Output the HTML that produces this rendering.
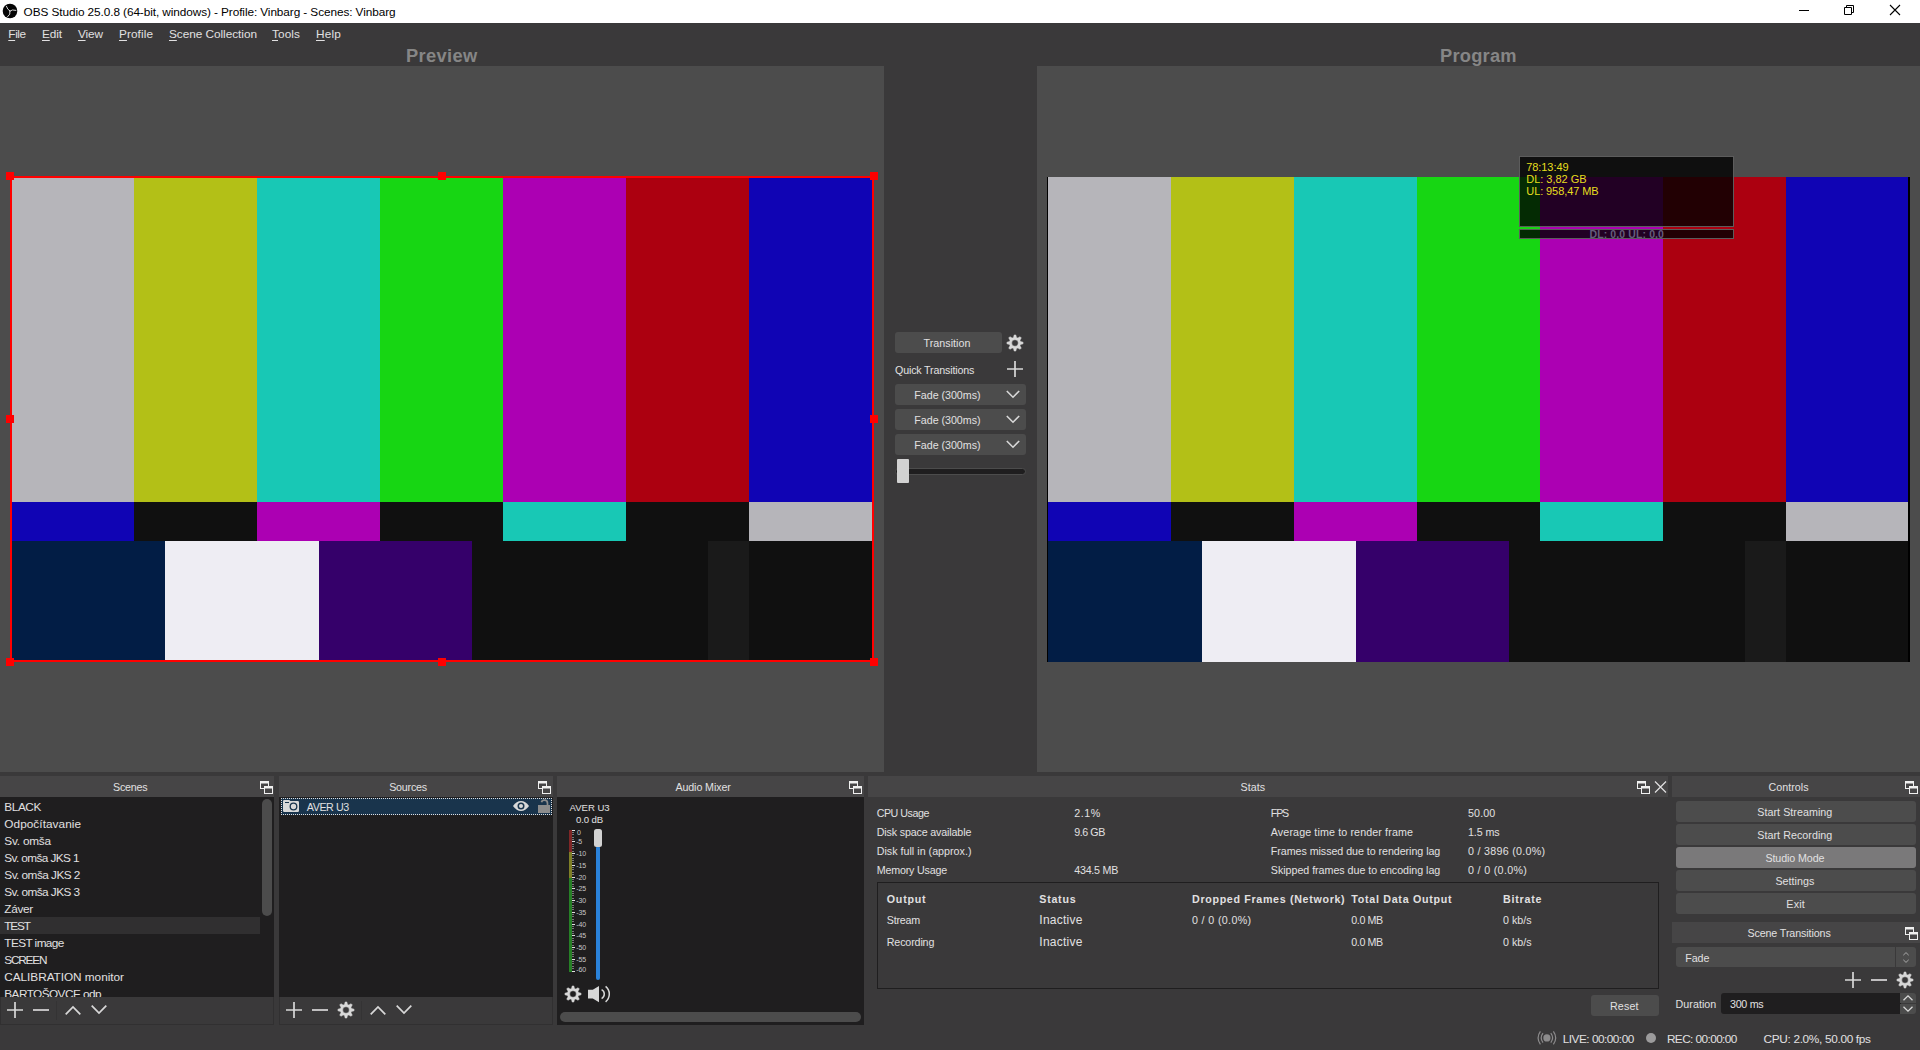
<!DOCTYPE html>
<html>
<head>
<meta charset="utf-8">
<title>OBS Studio</title>
<style>
*{box-sizing:border-box;margin:0;padding:0}
html,body{width:1920px;height:1050px;overflow:hidden;background:#3a393a;font-family:"Liberation Sans",sans-serif;color:#e1e0e1}
.a{position:absolute}
.t{position:absolute;white-space:nowrap}
.bars{position:absolute;overflow:hidden;background:#101010}
.bars div{position:absolute}
svg{position:absolute;overflow:visible}
u{text-decoration:underline;text-underline-offset:1.500px;text-decoration-thickness:1px}
</style>
</head>
<body>

<div class="a" style="left:0px;top:0px;width:1920px;height:23px;background:#fff;"></div>
<svg style="left:2px;top:3px" width="16" height="16" viewBox="0 0 16 16"><g transform="translate(0.5 0.5)"><circle cx="7.500" cy="7.500" r="7.300" fill="#050505"/><g fill="none" stroke="#d8d8d8" stroke-width="1" stroke-linecap="round"><path d="M7.500 7.500Q4.700 6.200 3.900 2.800"/><path d="M7.500 7.500Q9.300 5.600 13.400 6.800"/><path d="M7.500 7.500Q8.400 11 5.200 13.200"/></g></g></svg>
<div class="t" style="left:23.60px;top:3.50px;font-size:11.8px;line-height:16px;height:16px;color:#000;letter-spacing:-0.084px">OBS Studio 25.0.8 (64-bit, windows) - Profile: Vinbarg - Scenes: Vinbarg</div>
<svg style="left:1799px;top:10px" width="11" height="2" viewBox="0 0 11 2"><path d="M0 .5h10" stroke="#000"/></svg>
<svg style="left:1844px;top:5px" width="11" height="11" viewBox="0 0 11 11"><path d="M.5 2.500h7v7h-7zM2.500 2.500v-2h7v7h-2" fill="none" stroke="#000"/></svg>
<svg style="left:1890px;top:5px" width="11" height="11" viewBox="0 0 11 11"><path d="M0 0l10 10M10 0L0 10" stroke="#000" stroke-width="1.100"/></svg>
<div class="t" style="left:8.30px;top:25.60px;font-size:11.8px;line-height:16px;height:16px;letter-spacing:-0.380px"><u>F</u>ile</div>
<div class="t" style="left:42.00px;top:25.60px;font-size:11.8px;line-height:16px;height:16px;letter-spacing:-0.098px"><u>E</u>dit</div>
<div class="t" style="left:78.00px;top:25.60px;font-size:11.8px;line-height:16px;height:16px;letter-spacing:-0.103px"><u>V</u>iew</div>
<div class="t" style="left:119.00px;top:25.60px;font-size:11.8px;line-height:16px;height:16px;letter-spacing:0.084px"><u>P</u>rofile</div>
<div class="t" style="left:169.00px;top:25.60px;font-size:11.8px;line-height:16px;height:16px;letter-spacing:-0.035px"><u>S</u>cene Collection</div>
<div class="t" style="left:272.00px;top:25.60px;font-size:11.8px;line-height:16px;height:16px;letter-spacing:0.097px"><u>T</u>ools</div>
<div class="t" style="left:316.00px;top:25.60px;font-size:11.8px;line-height:16px;height:16px;letter-spacing:0.205px"><u>H</u>elp</div>
<div class="t" style="left:406.00px;top:43.75px;font-size:18.3px;line-height:24px;height:24px;font-weight:bold;color:#868686;letter-spacing:0.352px">Preview</div>
<div class="t" style="left:1440.00px;top:43.75px;font-size:18.3px;line-height:24px;height:24px;font-weight:bold;color:#868686;letter-spacing:0.233px">Program</div>
<div class="a" style="left:0px;top:66px;width:884px;height:706px;background:#4c4c4c;"></div>
<div class="a" style="left:1037px;top:66px;width:883px;height:706px;background:#4c4c4c;"></div>
<div class="bars" style="left:11px;top:178px;width:861px;height:482px"><div style="left:0;top:0px;width:861px;height:324px;background:linear-gradient(90deg,#b6b5ba 0px 123.0px,#b3c017 123.0px 246.0px,#18c8b5 246.0px 369.0px,#17d613 369.0px 492.0px,#ac00b3 492.0px 615.0px,#ac0010 615.0px 738.0px,#1004b4 738.0px 861.0px)"></div><div style="left:0;top:324px;width:861px;height:39px;background:linear-gradient(90deg,#1004b4 0px 123.0px,#101010 123.0px 246.0px,#ac00b3 246.0px 369.0px,#101010 369.0px 492.0px,#18c8b5 492.0px 615.0px,#101010 615.0px 738.0px,#b6b5ba 738.0px 861.0px)"></div><div style="left:0;top:363px;width:861px;height:119px;background:linear-gradient(90deg,#021d45 0px 153.75px,#eeedf3 153.75px 307.5px,#35006a 307.5px 461.25px,#101010 461.25px 697.0px,#1a1a1a 697.0px 738.0px,#101010 738.0px 861.0px)"></div></div>
<div class="bars" style="left:1047px;top:177px;width:863px;height:485px"><div style="left:0;top:0px;width:863px;height:325px;background:linear-gradient(90deg,#000 0px 1.4px,#b6b5ba 1.4px 124.27px,#b3c017 124.27px 247.14px,#18c8b5 247.14px 370.01px,#17d613 370.01px 492.89px,#ac00b3 492.89px 615.76px,#ac0010 615.76px 738.63px,#1004b4 738.63px 861.5px,#000 861.5px 863px)"></div><div style="left:0;top:325px;width:863px;height:39px;background:linear-gradient(90deg,#000 0px 1.4px,#1004b4 1.4px 124.27px,#101010 124.27px 247.14px,#ac00b3 247.14px 370.01px,#101010 370.01px 492.89px,#18c8b5 492.89px 615.76px,#101010 615.76px 738.63px,#b6b5ba 738.63px 861.5px,#000 861.5px 863px)"></div><div style="left:0;top:364px;width:863px;height:121px;background:linear-gradient(90deg,#000 0px 1.4px,#021d45 1.4px 154.99px,#eeedf3 154.99px 308.58px,#35006a 308.58px 462.17px,#101010 462.17px 697.67px,#1a1a1a 697.67px 738.63px,#101010 738.63px 861.5px,#000 861.5px 863px)"></div></div>
<div class="a" style="left:10px;top:176px;width:864px;height:486px;border:2px solid #f00"></div>
<div class="a" style="left:6px;top:172px;width:8px;height:8px;background:#f00;"></div>
<div class="a" style="left:438px;top:172px;width:8px;height:8px;background:#f00;"></div>
<div class="a" style="left:870px;top:172px;width:8px;height:8px;background:#f00;"></div>
<div class="a" style="left:6px;top:415px;width:8px;height:8px;background:#f00;"></div>
<div class="a" style="left:870px;top:415px;width:8px;height:8px;background:#f00;"></div>
<div class="a" style="left:6px;top:658px;width:8px;height:8px;background:#f00;"></div>
<div class="a" style="left:438px;top:658px;width:8px;height:8px;background:#f00;"></div>
<div class="a" style="left:870px;top:658px;width:8px;height:8px;background:#f00;"></div>
<div class="a" style="left:1519px;top:156px;width:215px;height:71px;background:rgba(0,0,0,.8);border:1px solid #5c5c5c"></div>
<div class="a" style="left:1519px;top:229px;width:215px;height:10px;background:rgba(0,0,0,.8);border:1px solid #5c5c5c"></div>
<div class="t" style="left:1526.30px;top:160.30px;font-size:11px;line-height:14px;height:14px;color:#e6de1e;letter-spacing:-0.084px">78:13:49</div>
<div class="t" style="left:1526.30px;top:172.30px;font-size:11px;line-height:14px;height:14px;color:#e6de1e;letter-spacing:-0.033px">DL: 3,82 GB</div>
<div class="t" style="left:1526.30px;top:184.30px;font-size:11px;line-height:14px;height:14px;color:#e6de1e;letter-spacing:-0.094px">UL: 958,47 MB</div>
<div class="t" style="left:1589.50px;top:228.00px;font-size:10.5px;line-height:12px;height:12px;font-weight:bold;color:#655d7c;letter-spacing:0.108px">DL: 0,0 UL: 0,0</div>
<div class="a" style="left:895px;top:332px;width:107px;height:21px;background:#4c4c4c;border-radius:3px;"></div>
<div class="t" style="left:923.50px;top:335.00px;font-size:10.7px;line-height:16px;height:16px;letter-spacing:0.049px">Transition</div>
<svg style="left:1007px;top:335px" width="17" height="17" viewBox="0 0 17 17"><path fill="#d8d8d8" fill-rule="evenodd" stroke="#d8d8d8" stroke-width=".5" stroke-linejoin="round" d="M6.52 2.49L7.15 -0.06L8.85 -0.06L9.48 2.49L10.85 3.06L13.10 1.71L14.29 2.90L12.94 5.15L13.51 6.52L16.06 7.15L16.06 8.85L13.51 9.48L12.94 10.85L14.29 13.10L13.10 14.29L10.85 12.94L9.48 13.51L8.85 16.06L7.15 16.06L6.52 13.51L5.15 12.94L2.90 14.29L1.71 13.10L3.06 10.85L2.49 9.48L-0.06 8.85L-0.06 7.15L2.49 6.52L3.06 5.15L1.71 2.90L2.90 1.71L5.15 3.06zM8 4.700a3.300 3.300 0 1 0 0 6.600 3.300 3.300 0 0 0 0-6.600z"/></svg>
<div class="t" style="left:895.00px;top:362.00px;font-size:10.7px;line-height:16px;height:16px;letter-spacing:-0.162px">Quick Transitions</div>
<svg style="left:1007px;top:361px" width="17" height="17" viewBox="0 0 17 17"><path d="M8 0v16M0 8h16" stroke="#d8d8d8" stroke-width="1.700" fill="none"/></svg>
<div class="a" style="left:895px;top:384px;width:131px;height:21px;background:#4c4c4c;border-radius:3px;"></div>
<div class="t" style="left:914.30px;top:387.00px;font-size:10.7px;line-height:16px;height:16px;letter-spacing:-0.029px">Fade (300ms)</div>
<svg style="left:1006px;top:390px" width="15" height="10" viewBox="0 0 15 10"><path d="M.8 1l6.200 6.200L13.200 1" stroke="#d8d8d8" stroke-width="1.600" fill="none"/></svg>
<div class="a" style="left:895px;top:409px;width:131px;height:21px;background:#4c4c4c;border-radius:3px;"></div>
<div class="t" style="left:914.30px;top:412.00px;font-size:10.7px;line-height:16px;height:16px;letter-spacing:-0.029px">Fade (300ms)</div>
<svg style="left:1006px;top:415px" width="15" height="10" viewBox="0 0 15 10"><path d="M.8 1l6.200 6.200L13.200 1" stroke="#d8d8d8" stroke-width="1.600" fill="none"/></svg>
<div class="a" style="left:895px;top:434px;width:131px;height:21px;background:#4c4c4c;border-radius:3px;"></div>
<div class="t" style="left:914.30px;top:437.00px;font-size:10.7px;line-height:16px;height:16px;letter-spacing:-0.029px">Fade (300ms)</div>
<svg style="left:1006px;top:440px" width="15" height="10" viewBox="0 0 15 10"><path d="M.8 1l6.200 6.200L13.200 1" stroke="#d8d8d8" stroke-width="1.600" fill="none"/></svg>
<div class="a" style="left:895px;top:468px;width:131px;height:7px;background:#1f1e1f;border-radius:3.500px;border:1px solid #4c4c4c"></div>
<div class="a" style="left:897px;top:459px;width:12px;height:24px;background:#d2d2d2;border-radius:1px"></div>
<div class="a" style="left:0px;top:776px;width:274px;height:21px;background:#464546;"></div>
<div class="t" style="left:113.10px;top:779.00px;font-size:10.7px;line-height:16px;height:16px;letter-spacing:-0.228px">Scenes</div>
<svg style="left:260px;top:781px" width="14" height="14" viewBox="0 0 14 14"><rect x="0.5" y="0.5" width="8" height="7" fill="#464546" stroke="#f0f0f0" stroke-width="1"/><rect x="0" y="0" width="9" height="2.500" fill="#f0f0f0"/><rect x="4.5" y="5.5" width="8" height="7" fill="#464546" stroke="#f0f0f0" stroke-width="1"/><rect x="4" y="5" width="9" height="2.500" fill="#f0f0f0"/></svg>
<div class="a" style="left:279px;top:776px;width:274px;height:21px;background:#464546;"></div>
<div class="t" style="left:389.20px;top:779.00px;font-size:10.7px;line-height:16px;height:16px;letter-spacing:-0.203px">Sources</div>
<svg style="left:538px;top:781px" width="14" height="14" viewBox="0 0 14 14"><rect x="0.5" y="0.5" width="8" height="7" fill="#464546" stroke="#f0f0f0" stroke-width="1"/><rect x="0" y="0" width="9" height="2.500" fill="#f0f0f0"/><rect x="4.5" y="5.5" width="8" height="7" fill="#464546" stroke="#f0f0f0" stroke-width="1"/><rect x="4" y="5" width="9" height="2.500" fill="#f0f0f0"/></svg>
<div class="a" style="left:557px;top:776px;width:307px;height:21px;background:#464546;"></div>
<div class="t" style="left:675.40px;top:779.00px;font-size:10.7px;line-height:16px;height:16px;letter-spacing:-0.099px">Audio Mixer</div>
<svg style="left:849px;top:781px" width="14" height="14" viewBox="0 0 14 14"><rect x="0.5" y="0.5" width="8" height="7" fill="#464546" stroke="#f0f0f0" stroke-width="1"/><rect x="0" y="0" width="9" height="2.500" fill="#f0f0f0"/><rect x="4.5" y="5.5" width="8" height="7" fill="#464546" stroke="#f0f0f0" stroke-width="1"/><rect x="4" y="5" width="9" height="2.500" fill="#f0f0f0"/></svg>
<div class="a" style="left:868px;top:776px;width:800px;height:21px;background:#464546;"></div>
<div class="t" style="left:1240.50px;top:779.00px;font-size:10.7px;line-height:16px;height:16px;letter-spacing:0.076px">Stats</div>
<svg style="left:1637px;top:781px" width="14" height="14" viewBox="0 0 14 14"><rect x="0.5" y="0.5" width="8" height="7" fill="#464546" stroke="#f0f0f0" stroke-width="1"/><rect x="0" y="0" width="9" height="2.500" fill="#f0f0f0"/><rect x="4.5" y="5.5" width="8" height="7" fill="#464546" stroke="#f0f0f0" stroke-width="1"/><rect x="4" y="5" width="9" height="2.500" fill="#f0f0f0"/></svg>
<svg style="left:1654px;top:781px" width="13" height="13" viewBox="0 0 13 13"><g transform="translate(0.5 0)"><path d="M.5.500l11 11M11.500.500l-11 11" stroke="#e1e0e1" stroke-width="1.200"/></g></svg>
<div class="a" style="left:1672px;top:776px;width:248px;height:21px;background:#464546;"></div>
<div class="t" style="left:1768.40px;top:779.00px;font-size:10.7px;line-height:16px;height:16px;letter-spacing:0.067px">Controls</div>
<svg style="left:1905px;top:781px" width="14" height="14" viewBox="0 0 14 14"><rect x="0.5" y="0.5" width="8" height="7" fill="#464546" stroke="#f0f0f0" stroke-width="1"/><rect x="0" y="0" width="9" height="2.500" fill="#f0f0f0"/><rect x="4.5" y="5.5" width="8" height="7" fill="#464546" stroke="#f0f0f0" stroke-width="1"/><rect x="4" y="5" width="9" height="2.500" fill="#f0f0f0"/></svg>
<div class="a" style="left:0px;top:797px;width:274px;height:200px;background:#1f1e1f;"></div>
<div class="a" style="left:0;top:797px;width:260px;height:200px;overflow:hidden">
<div class="a" style="left:0px;top:120px;width:260px;height:17px;background:#302f30;"></div>
<div class="t" style="left:4.30px;top:0.70px;font-size:11.8px;line-height:18px;height:18px;letter-spacing:-0.419px">BLACK</div>
<div class="t" style="left:4.30px;top:17.70px;font-size:11.8px;line-height:18px;height:18px;letter-spacing:0.050px">Odpočítavanie</div>
<div class="t" style="left:4.30px;top:34.70px;font-size:11.8px;line-height:18px;height:18px;letter-spacing:-0.213px">Sv. omša</div>
<div class="t" style="left:4.30px;top:51.70px;font-size:11.8px;line-height:18px;height:18px;letter-spacing:-0.596px">Sv. omša JKS 1</div>
<div class="t" style="left:4.30px;top:68.70px;font-size:11.8px;line-height:18px;height:18px;letter-spacing:-0.537px">Sv. omša JKS 2</div>
<div class="t" style="left:4.30px;top:85.70px;font-size:11.8px;line-height:18px;height:18px;letter-spacing:-0.559px">Sv. omša JKS 3</div>
<div class="t" style="left:4.30px;top:102.70px;font-size:11.8px;line-height:18px;height:18px;letter-spacing:-0.324px">Záver</div>
<div class="t" style="left:4.30px;top:119.70px;font-size:11.8px;line-height:18px;height:18px;letter-spacing:-1.200px">TEST</div>
<div class="t" style="left:4.30px;top:136.70px;font-size:11.8px;line-height:18px;height:18px;letter-spacing:-0.584px">TEST image</div>
<div class="t" style="left:4.30px;top:153.70px;font-size:11.8px;line-height:18px;height:18px;letter-spacing:-1.200px">SCREEN</div>
<div class="t" style="left:4.30px;top:170.70px;font-size:11.8px;line-height:18px;height:18px;letter-spacing:-0.044px">CALIBRATION monitor</div>
<div class="t" style="left:4.30px;top:187.70px;font-size:11.8px;line-height:18px;height:18px;letter-spacing:-0.562px">BARTOŠOVCE odp</div>
</div>
<div class="a" style="left:262px;top:799px;width:10px;height:117px;background:#4c4c4c;border-radius:5px"></div>
<div class="a" style="left:0;top:997px;width:274px;height:28px;border:1px solid #313031;border-top:none"></div>
<svg style="left:7px;top:1002px" width="17" height="17" viewBox="0 0 17 17"><path d="M8 0v16M0 8h16" stroke="#d8d8d8" stroke-width="1.700" fill="none"/></svg><svg style="left:33px;top:1002px" width="17" height="17" viewBox="0 0 17 17"><path d="M0 8h16" stroke="#d8d8d8" stroke-width="1.700" fill="none"/></svg><svg style="left:65px;top:1002px" width="17" height="17" viewBox="0 0 17 17"><path d="M.7 12.300L8 5l7.300 7.300" stroke="#d8d8d8" stroke-width="1.700" fill="none"/></svg><svg style="left:91px;top:1002px" width="17" height="17" viewBox="0 0 17 17"><path d="M.7 3.700L8 11l7.300-7.300" stroke="#d8d8d8" stroke-width="1.700" fill="none"/></svg>
<div class="a" style="left:56px;top:1001px;width:1px;height:19px;background:#343334;"></div>
<div class="a" style="left:279px;top:797px;width:274px;height:200px;background:#1f1e1f;"></div>
<div class="a" style="left:281px;top:798px;width:271px;height:17px;background:#19344c;border:1px dotted #e1e0e1"></div>
<svg style="left:283px;top:800px" width="17" height="13" viewBox="0 0 17 13"><path d="M0 1.200Q0 0 1.200 0h4.600Q7 0 7.300 1H14.800Q16 1 16 2.200V10.800Q16 12 14.800 12H1.200Q0 12 0 10.800z" fill="#d8d8d8"/><circle cx="10.500" cy="6.500" r="3.300" fill="none" stroke="#19344c" stroke-width="1.300"/><path d="M2 2.500h4" stroke="#19344c" stroke-width="1"/></svg>
<div class="t" style="left:306.80px;top:798.80px;font-size:10.7px;line-height:16px;height:16px;letter-spacing:-0.424px">AVER U3</div>
<svg style="left:513px;top:801px" width="17" height="11" viewBox="0 0 17 11"><path d="M0 5Q3.500 0 8 0T16 5Q12.500 10 8 10T0 5z" fill="#d8d8d8"/><circle cx="8" cy="5" r="3.500" fill="#19344c"/><circle cx="8" cy="5" r="2" fill="#d8d8d8"/></svg>
<svg style="left:538px;top:799px" width="14" height="15" viewBox="0 0 14 15"><path d="M3.500 3.300Q4 1.200 6.500 1.200Q9.500 1.200 9.500 4.200V6.500" fill="none" stroke="#8c8c8c" stroke-width="1.700"/><rect x="0" y="6" width="12" height="8" fill="#8c8c8c"/></svg>
<div class="a" style="left:279px;top:997px;width:274px;height:28px;border:1px solid #313031;border-top:none"></div>
<svg style="left:286px;top:1002px" width="17" height="17" viewBox="0 0 17 17"><path d="M8 0v16M0 8h16" stroke="#d8d8d8" stroke-width="1.700" fill="none"/></svg><svg style="left:312px;top:1002px" width="17" height="17" viewBox="0 0 17 17"><path d="M0 8h16" stroke="#d8d8d8" stroke-width="1.700" fill="none"/></svg><svg style="left:338px;top:1002px" width="17" height="17" viewBox="0 0 17 17"><path fill="#d8d8d8" fill-rule="evenodd" stroke="#d8d8d8" stroke-width=".5" stroke-linejoin="round" d="M6.52 2.49L7.15 -0.06L8.85 -0.06L9.48 2.49L10.85 3.06L13.10 1.71L14.29 2.90L12.94 5.15L13.51 6.52L16.06 7.15L16.06 8.85L13.51 9.48L12.94 10.85L14.29 13.10L13.10 14.29L10.85 12.94L9.48 13.51L8.85 16.06L7.15 16.06L6.52 13.51L5.15 12.94L2.90 14.29L1.71 13.10L3.06 10.85L2.49 9.48L-0.06 8.85L-0.06 7.15L2.49 6.52L3.06 5.15L1.71 2.90L2.90 1.71L5.15 3.06zM8 4.700a3.300 3.300 0 1 0 0 6.600 3.300 3.300 0 0 0 0-6.600z"/></svg><svg style="left:370px;top:1002px" width="17" height="17" viewBox="0 0 17 17"><path d="M.7 12.300L8 5l7.300 7.300" stroke="#d8d8d8" stroke-width="1.700" fill="none"/></svg><svg style="left:396px;top:1002px" width="17" height="17" viewBox="0 0 17 17"><path d="M.7 3.700L8 11l7.300-7.300" stroke="#d8d8d8" stroke-width="1.700" fill="none"/></svg>
<div class="a" style="left:361px;top:1001px;width:1px;height:19px;background:#343334;"></div>
<div class="a" style="left:557px;top:797px;width:307px;height:228px;background:#1f1e1f;"></div>
<div class="t" style="left:569.60px;top:801.70px;font-size:9.6px;line-height:12px;height:12px;letter-spacing:-0.053px">AVER U3</div>
<div class="t" style="left:576.00px;top:814.30px;font-size:9.6px;line-height:12px;height:12px;letter-spacing:-0.136px">0.0 dB</div>
<div class="a" style="left:569px;top:830px;width:3px;height:22px;background:#7f2626;"></div><div class="a" style="left:569px;top:852px;width:3px;height:26px;background:#7f7f26;"></div><div class="a" style="left:569px;top:878px;width:3px;height:94px;background:#267f26;"></div>
<div class="a" style="left:572px;top:830px;width:3px;height:1px;background:#e1e0e1;"></div><div class="a" style="left:572px;top:832px;width:2px;height:1px;background:#7a797a;"></div><div class="a" style="left:572px;top:834px;width:2px;height:1px;background:#7a797a;"></div><div class="a" style="left:572px;top:837px;width:2px;height:1px;background:#7a797a;"></div><div class="a" style="left:572px;top:839px;width:2px;height:1px;background:#7a797a;"></div><div class="a" style="left:572px;top:841px;width:3px;height:1px;background:#e1e0e1;"></div><div class="a" style="left:572px;top:844px;width:2px;height:1px;background:#7a797a;"></div><div class="a" style="left:572px;top:846px;width:2px;height:1px;background:#7a797a;"></div><div class="a" style="left:572px;top:848px;width:2px;height:1px;background:#7a797a;"></div><div class="a" style="left:572px;top:851px;width:2px;height:1px;background:#7a797a;"></div><div class="a" style="left:572px;top:853px;width:3px;height:1px;background:#e1e0e1;"></div><div class="a" style="left:572px;top:855px;width:2px;height:1px;background:#7a797a;"></div><div class="a" style="left:572px;top:858px;width:2px;height:1px;background:#7a797a;"></div><div class="a" style="left:572px;top:860px;width:2px;height:1px;background:#7a797a;"></div><div class="a" style="left:572px;top:862px;width:2px;height:1px;background:#7a797a;"></div><div class="a" style="left:572px;top:865px;width:3px;height:1px;background:#e1e0e1;"></div><div class="a" style="left:572px;top:867px;width:2px;height:1px;background:#7a797a;"></div><div class="a" style="left:572px;top:869px;width:2px;height:1px;background:#7a797a;"></div><div class="a" style="left:572px;top:872px;width:2px;height:1px;background:#7a797a;"></div><div class="a" style="left:572px;top:874px;width:2px;height:1px;background:#7a797a;"></div><div class="a" style="left:572px;top:877px;width:3px;height:1px;background:#e1e0e1;"></div><div class="a" style="left:572px;top:879px;width:2px;height:1px;background:#7a797a;"></div><div class="a" style="left:572px;top:881px;width:2px;height:1px;background:#7a797a;"></div><div class="a" style="left:572px;top:884px;width:2px;height:1px;background:#7a797a;"></div><div class="a" style="left:572px;top:886px;width:2px;height:1px;background:#7a797a;"></div><div class="a" style="left:572px;top:888px;width:3px;height:1px;background:#e1e0e1;"></div><div class="a" style="left:572px;top:891px;width:2px;height:1px;background:#7a797a;"></div><div class="a" style="left:572px;top:893px;width:2px;height:1px;background:#7a797a;"></div><div class="a" style="left:572px;top:895px;width:2px;height:1px;background:#7a797a;"></div><div class="a" style="left:572px;top:898px;width:2px;height:1px;background:#7a797a;"></div><div class="a" style="left:572px;top:900px;width:3px;height:1px;background:#e1e0e1;"></div><div class="a" style="left:572px;top:902px;width:2px;height:1px;background:#7a797a;"></div><div class="a" style="left:572px;top:905px;width:2px;height:1px;background:#7a797a;"></div><div class="a" style="left:572px;top:907px;width:2px;height:1px;background:#7a797a;"></div><div class="a" style="left:572px;top:909px;width:2px;height:1px;background:#7a797a;"></div><div class="a" style="left:572px;top:912px;width:3px;height:1px;background:#e1e0e1;"></div><div class="a" style="left:572px;top:914px;width:2px;height:1px;background:#7a797a;"></div><div class="a" style="left:572px;top:916px;width:2px;height:1px;background:#7a797a;"></div><div class="a" style="left:572px;top:919px;width:2px;height:1px;background:#7a797a;"></div><div class="a" style="left:572px;top:921px;width:2px;height:1px;background:#7a797a;"></div><div class="a" style="left:572px;top:924px;width:3px;height:1px;background:#e1e0e1;"></div><div class="a" style="left:572px;top:926px;width:2px;height:1px;background:#7a797a;"></div><div class="a" style="left:572px;top:928px;width:2px;height:1px;background:#7a797a;"></div><div class="a" style="left:572px;top:931px;width:2px;height:1px;background:#7a797a;"></div><div class="a" style="left:572px;top:933px;width:2px;height:1px;background:#7a797a;"></div><div class="a" style="left:572px;top:935px;width:3px;height:1px;background:#e1e0e1;"></div><div class="a" style="left:572px;top:938px;width:2px;height:1px;background:#7a797a;"></div><div class="a" style="left:572px;top:940px;width:2px;height:1px;background:#7a797a;"></div><div class="a" style="left:572px;top:942px;width:2px;height:1px;background:#7a797a;"></div><div class="a" style="left:572px;top:945px;width:2px;height:1px;background:#7a797a;"></div><div class="a" style="left:572px;top:947px;width:3px;height:1px;background:#e1e0e1;"></div><div class="a" style="left:572px;top:949px;width:2px;height:1px;background:#7a797a;"></div><div class="a" style="left:572px;top:952px;width:2px;height:1px;background:#7a797a;"></div><div class="a" style="left:572px;top:954px;width:2px;height:1px;background:#7a797a;"></div><div class="a" style="left:572px;top:956px;width:2px;height:1px;background:#7a797a;"></div><div class="a" style="left:572px;top:959px;width:3px;height:1px;background:#e1e0e1;"></div><div class="a" style="left:572px;top:961px;width:2px;height:1px;background:#7a797a;"></div><div class="a" style="left:572px;top:963px;width:2px;height:1px;background:#7a797a;"></div><div class="a" style="left:572px;top:966px;width:2px;height:1px;background:#7a797a;"></div><div class="a" style="left:572px;top:968px;width:2px;height:1px;background:#7a797a;"></div><div class="a" style="left:572px;top:971px;width:3px;height:1px;background:#e1e0e1;"></div>
<div class="t" style="left:577.00px;top:828.20px;font-size:7px;line-height:9px;height:9px;color:#c8c8c8;letter-spacing:0.094px">0</div>
<div class="t" style="left:576.30px;top:837.10px;font-size:7px;line-height:9px;height:9px;color:#c8c8c8;letter-spacing:-0.356px">-5</div>
<div class="t" style="left:576.30px;top:849.20px;font-size:7px;line-height:9px;height:9px;color:#c8c8c8;letter-spacing:-0.170px">-10</div>
<div class="t" style="left:576.30px;top:861.20px;font-size:7px;line-height:9px;height:9px;color:#c8c8c8;letter-spacing:-0.170px">-15</div>
<div class="t" style="left:576.30px;top:873.00px;font-size:7px;line-height:9px;height:9px;color:#c8c8c8;letter-spacing:-0.170px">-20</div>
<div class="t" style="left:576.30px;top:884.20px;font-size:7px;line-height:9px;height:9px;color:#c8c8c8;letter-spacing:-0.170px">-25</div>
<div class="t" style="left:576.30px;top:896.00px;font-size:7px;line-height:9px;height:9px;color:#c8c8c8;letter-spacing:-0.170px">-30</div>
<div class="t" style="left:576.30px;top:908.10px;font-size:7px;line-height:9px;height:9px;color:#c8c8c8;letter-spacing:-0.170px">-35</div>
<div class="t" style="left:576.30px;top:919.90px;font-size:7px;line-height:9px;height:9px;color:#c8c8c8;letter-spacing:-0.170px">-40</div>
<div class="t" style="left:576.30px;top:931.00px;font-size:7px;line-height:9px;height:9px;color:#c8c8c8;letter-spacing:-0.170px">-45</div>
<div class="t" style="left:576.30px;top:942.80px;font-size:7px;line-height:9px;height:9px;color:#c8c8c8;letter-spacing:-0.170px">-50</div>
<div class="t" style="left:576.30px;top:954.50px;font-size:7px;line-height:9px;height:9px;color:#c8c8c8;letter-spacing:-0.170px">-55</div>
<div class="t" style="left:576.30px;top:965.00px;font-size:7px;line-height:9px;height:9px;color:#c8c8c8;letter-spacing:-0.170px">-60</div>
<div class="a" style="left:596px;top:846px;width:4px;height:134px;background:#2a82da;border-radius:2px"></div>
<div class="a" style="left:594px;top:829px;width:8px;height:18px;background:#d2d2d2;border-radius:2.500px"></div>
<svg style="left:565px;top:986px" width="17" height="17" viewBox="0 0 17 17"><path fill="#d8d8d8" fill-rule="evenodd" stroke="#d8d8d8" stroke-width=".5" stroke-linejoin="round" d="M6.52 2.49L7.15 -0.06L8.85 -0.06L9.48 2.49L10.85 3.06L13.10 1.71L14.29 2.90L12.94 5.15L13.51 6.52L16.06 7.15L16.06 8.85L13.51 9.48L12.94 10.85L14.29 13.10L13.10 14.29L10.85 12.94L9.48 13.51L8.85 16.06L7.15 16.06L6.52 13.51L5.15 12.94L2.90 14.29L1.71 13.10L3.06 10.85L2.49 9.48L-0.06 8.85L-0.06 7.15L2.49 6.52L3.06 5.15L1.71 2.90L2.90 1.71L5.15 3.06zM8 4.700a3.300 3.300 0 1 0 0 6.600 3.300 3.300 0 0 0 0-6.600z"/></svg>
<svg style="left:588px;top:986px" width="24" height="18" viewBox="0 0 24 18"><path d="M0 3.800h4.800L11 0v16.300L4.800 12.400H0z" fill="#d8d8d8"/><path d="M13.600 3.600A5.100 5.100 0 0 1 13.600 12.600" fill="none" stroke="#d8d8d8" stroke-width="1.500"/><path d="M17.600 .4A9.860 9.860 0 0 1 17.600 15.800" fill="none" stroke="#d8d8d8" stroke-width="1.500"/></svg>
<div class="a" style="left:560px;top:1012px;width:301px;height:10px;background:#4c4c4c;border-radius:5px"></div>
<div class="t" style="left:876.70px;top:805.00px;font-size:10.7px;line-height:16px;height:16px;letter-spacing:-0.463px">CPU Usage</div>
<div class="t" style="left:876.70px;top:824.00px;font-size:10.7px;line-height:16px;height:16px;letter-spacing:-0.146px">Disk space available</div>
<div class="t" style="left:876.70px;top:843.00px;font-size:10.7px;line-height:16px;height:16px;letter-spacing:0.017px">Disk full in (approx.)</div>
<div class="t" style="left:876.70px;top:862.00px;font-size:10.7px;line-height:16px;height:16px;letter-spacing:-0.171px">Memory Usage</div>
<div class="t" style="left:1074.20px;top:805.00px;font-size:10.7px;line-height:16px;height:16px;letter-spacing:0.550px">2.1%</div>
<div class="t" style="left:1074.20px;top:824.00px;font-size:10.7px;line-height:16px;height:16px;letter-spacing:-0.415px">9.6 GB</div>
<div class="t" style="left:1074.20px;top:862.00px;font-size:10.7px;line-height:16px;height:16px;letter-spacing:-0.220px">434.5 MB</div>
<div class="t" style="left:1270.80px;top:805.00px;font-size:10.7px;line-height:16px;height:16px;letter-spacing:-1.200px">FPS</div>
<div class="t" style="left:1270.80px;top:824.00px;font-size:10.7px;line-height:16px;height:16px;letter-spacing:0.123px">Average time to render frame</div>
<div class="t" style="left:1270.80px;top:843.00px;font-size:10.7px;line-height:16px;height:16px;letter-spacing:-0.048px">Frames missed due to rendering lag</div>
<div class="t" style="left:1270.80px;top:862.00px;font-size:10.7px;line-height:16px;height:16px;letter-spacing:-0.031px">Skipped frames due to encoding lag</div>
<div class="t" style="left:1468.00px;top:805.00px;font-size:10.7px;line-height:16px;height:16px;letter-spacing:0.122px">50.00</div>
<div class="t" style="left:1468.00px;top:824.00px;font-size:10.7px;line-height:16px;height:16px;letter-spacing:-0.105px">1.5 ms</div>
<div class="t" style="left:1468.00px;top:843.00px;font-size:10.7px;line-height:16px;height:16px;letter-spacing:0.291px">0 / 3896 (0.0%)</div>
<div class="t" style="left:1468.00px;top:862.00px;font-size:10.7px;line-height:16px;height:16px;letter-spacing:0.326px">0 / 0 (0.0%)</div>
<div class="a" style="left:877px;top:882px;width:782px;height:107px;border:1px solid #1f1e1f"></div>
<div class="t" style="left:886.80px;top:891.20px;font-size:10.7px;line-height:16px;height:16px;font-weight:bold;letter-spacing:0.758px">Output</div>
<div class="t" style="left:1039.30px;top:891.20px;font-size:10.7px;line-height:16px;height:16px;font-weight:bold;letter-spacing:0.732px">Status</div>
<div class="t" style="left:1192.00px;top:891.20px;font-size:10.7px;line-height:16px;height:16px;font-weight:bold;letter-spacing:0.673px">Dropped Frames (Network)</div>
<div class="t" style="left:1351.30px;top:891.20px;font-size:10.7px;line-height:16px;height:16px;font-weight:bold;letter-spacing:0.712px">Total Data Output</div>
<div class="t" style="left:1503.00px;top:891.20px;font-size:10.7px;line-height:16px;height:16px;font-weight:bold;letter-spacing:0.775px">Bitrate</div>
<div class="t" style="left:886.80px;top:912.00px;font-size:10.7px;line-height:16px;height:16px;letter-spacing:-0.228px">Stream</div>
<div class="t" style="left:886.80px;top:934.00px;font-size:10.7px;line-height:16px;height:16px;letter-spacing:-0.143px">Recording</div>
<div class="t" style="left:1039.30px;top:911.50px;font-size:12px;line-height:16px;height:16px;letter-spacing:0.259px">Inactive</div>
<div class="t" style="left:1039.30px;top:933.50px;font-size:12px;line-height:16px;height:16px;letter-spacing:0.259px">Inactive</div>
<div class="t" style="left:1192.00px;top:912.00px;font-size:10.7px;line-height:16px;height:16px;letter-spacing:0.352px">0 / 0 (0.0%)</div>
<div class="t" style="left:1351.30px;top:912.00px;font-size:10.7px;line-height:16px;height:16px;letter-spacing:-0.393px">0.0 MB</div>
<div class="t" style="left:1351.30px;top:934.00px;font-size:10.7px;line-height:16px;height:16px;letter-spacing:-0.393px">0.0 MB</div>
<div class="t" style="left:1503.00px;top:912.00px;font-size:10.7px;line-height:16px;height:16px;letter-spacing:-0.003px">0 kb/s</div>
<div class="t" style="left:1503.00px;top:934.00px;font-size:10.7px;line-height:16px;height:16px;letter-spacing:-0.003px">0 kb/s</div>
<div class="a" style="left:1591px;top:995px;width:68px;height:21px;background:#4c4c4c;border-radius:3px;"></div>
<div class="t" style="left:1610.00px;top:998.00px;font-size:10.7px;line-height:16px;height:16px;letter-spacing:0.128px">Reset</div>
<div class="a" style="left:1676px;top:801px;width:240px;height:21px;background:#4c4c4c;border-radius:3px;"></div>
<div class="t" style="left:1757.30px;top:804.30px;font-size:10.7px;line-height:16px;height:16px;letter-spacing:0.052px">Start Streaming</div>
<div class="a" style="left:1676px;top:824px;width:240px;height:21px;background:#4c4c4c;border-radius:3px;"></div>
<div class="t" style="left:1757.30px;top:827.30px;font-size:10.7px;line-height:16px;height:16px;letter-spacing:0.051px">Start Recording</div>
<div class="a" style="left:1676px;top:847px;width:240px;height:21px;background:#7a797a;border-radius:3px;"></div>
<div class="t" style="left:1765.40px;top:850.30px;font-size:10.7px;line-height:16px;height:16px;letter-spacing:-0.097px">Studio Mode</div>
<div class="a" style="left:1676px;top:870px;width:240px;height:21px;background:#4c4c4c;border-radius:3px;"></div>
<div class="t" style="left:1775.40px;top:873.30px;font-size:10.7px;line-height:16px;height:16px;letter-spacing:0.050px">Settings</div>
<div class="a" style="left:1676px;top:893px;width:240px;height:21px;background:#4c4c4c;border-radius:3px;"></div>
<div class="t" style="left:1786.30px;top:896.30px;font-size:10.7px;line-height:16px;height:16px;letter-spacing:0.221px">Exit</div>
<div class="a" style="left:1672px;top:922px;width:248px;height:21px;background:#464546;"></div>
<div class="t" style="left:1747.40px;top:925.10px;font-size:10.7px;line-height:16px;height:16px;letter-spacing:-0.100px">Scene Transitions</div>
<svg style="left:1905px;top:927px" width="14" height="14" viewBox="0 0 14 14"><rect x="0.5" y="0.5" width="8" height="7" fill="#464546" stroke="#f0f0f0" stroke-width="1"/><rect x="0" y="0" width="9" height="2.500" fill="#f0f0f0"/><rect x="4.5" y="5.5" width="8" height="7" fill="#464546" stroke="#f0f0f0" stroke-width="1"/><rect x="4" y="5" width="9" height="2.500" fill="#f0f0f0"/></svg>
<div class="a" style="left:1676px;top:947px;width:240px;height:20px;background:#4c4c4c;border-radius:3px;"></div>
<div class="a" style="left:1895px;top:947px;width:1px;height:20px;background:#3a393a;"></div>
<div class="t" style="left:1685.30px;top:950.00px;font-size:10.7px;line-height:16px;height:16px;letter-spacing:-0.107px">Fade</div>
<svg style="left:1903px;top:952px" width="7" height="12" viewBox="0 0 7 12"><path d="M.3 3.200L3 .6l2.700 2.600M.3 7.800L3 10.400l2.700-2.600" stroke="#a8a8a8" stroke-width="1" fill="none"/></svg>
<svg style="left:1845px;top:972px" width="17" height="17" viewBox="0 0 17 17"><path d="M8 0v16M0 8h16" stroke="#d8d8d8" stroke-width="1.700" fill="none"/></svg><svg style="left:1871px;top:972px" width="17" height="17" viewBox="0 0 17 17"><path d="M0 8h16" stroke="#d8d8d8" stroke-width="1.700" fill="none"/></svg><svg style="left:1897px;top:972px" width="17" height="17" viewBox="0 0 17 17"><path fill="#d8d8d8" fill-rule="evenodd" stroke="#d8d8d8" stroke-width=".5" stroke-linejoin="round" d="M6.52 2.49L7.15 -0.06L8.85 -0.06L9.48 2.49L10.85 3.06L13.10 1.71L14.29 2.90L12.94 5.15L13.51 6.52L16.06 7.15L16.06 8.85L13.51 9.48L12.94 10.85L14.29 13.10L13.10 14.29L10.85 12.94L9.48 13.51L8.85 16.06L7.15 16.06L6.52 13.51L5.15 12.94L2.90 14.29L1.71 13.10L3.06 10.85L2.49 9.48L-0.06 8.85L-0.06 7.15L2.49 6.52L3.06 5.15L1.71 2.90L2.90 1.71L5.15 3.06zM8 4.700a3.300 3.300 0 1 0 0 6.600 3.300 3.300 0 0 0 0-6.600z"/></svg>
<div class="t" style="left:1675.60px;top:996.20px;font-size:10.7px;line-height:16px;height:16px;letter-spacing:0.039px">Duration</div>
<div class="a" style="left:1721px;top:993px;width:180px;height:21px;background:#1f1e1f;border-radius:3px 0 0 3px"></div>
<div class="t" style="left:1730.00px;top:996.00px;font-size:10.7px;line-height:16px;height:16px;letter-spacing:-0.284px">300 ms</div>
<div class="a" style="left:1900px;top:993px;width:16px;height:10px;background:#4c4c4c;border-radius:0 3px 0 0"></div><div class="a" style="left:1900px;top:1004px;width:16px;height:10px;background:#4c4c4c;border-radius:0 0 3px 0"></div>
<svg style="left:1903px;top:995px" width="11" height="7" viewBox="0 0 11 7"><path d="M.5 5.300L5 .9l4.500 4.400" stroke="#d8d8d8" stroke-width="1.300" fill="none"/></svg>
<svg style="left:1903px;top:1006px" width="11" height="7" viewBox="0 0 11 7"><path d="M.5 .7L5 5.100L9.500 .7" stroke="#d8d8d8" stroke-width="1.300" fill="none"/></svg>
<svg style="left:1537px;top:1031px" width="21" height="15" viewBox="0 0 21 15"><circle cx="9.900" cy="6.900" r="3.600" fill="#8c8b8c"/><g fill="none" stroke="#8c8b8c" stroke-width="1.200"><path d="M6 2.200Q2.400 6.900 6 11.600M13.800 2.200Q17.400 6.900 13.800 11.600M3.400 .4Q-1.200 6.900 3.400 13.400M16.400 .4Q21 6.900 16.400 13.400"/></g></svg>
<div class="t" style="left:1562.80px;top:1030.80px;font-size:11.8px;line-height:16px;height:16px;letter-spacing:-0.508px">LIVE: 00:00:00</div>
<div class="a" style="left:1646px;top:1033px;width:10px;height:10px;background:#9c9b9c;border-radius:5px"></div>
<div class="t" style="left:1666.90px;top:1030.80px;font-size:11.8px;line-height:16px;height:16px;letter-spacing:-0.575px">REC: 00:00:00</div>
<div class="t" style="left:1763.50px;top:1030.80px;font-size:11.8px;line-height:16px;height:16px;letter-spacing:-0.316px">CPU: 2.0%, 50.00 fps</div>
</body>
</html>
